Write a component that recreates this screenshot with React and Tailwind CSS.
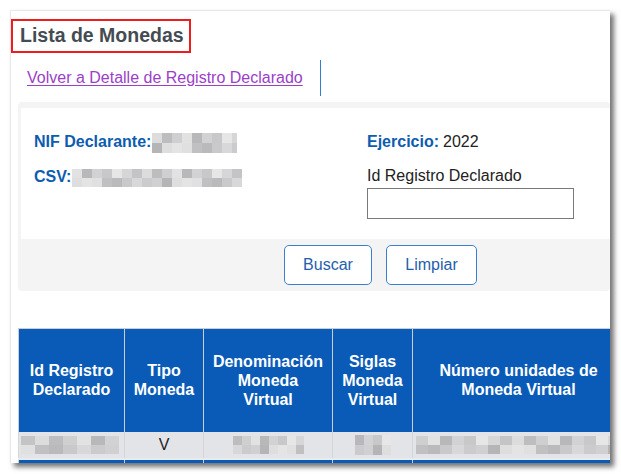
import React from "react";

const grays = [
  "bg-[#d6d6d8]", "bg-[#c4c4c6]", "bg-[#dcdcdc]", "bg-[#bdbdbf]", "bg-[#cfcfd1]",
  "bg-[#e2e2e2]", "bg-[#b8b8ba]", "bg-[#d2d2d4]", "bg-[#c8c8ca]", "bg-[#e6e6e6]",
];
const grays2 = [
  "bg-[#c9c9cb]", "bg-[#e0e0e0]", "bg-[#b5b5b7]", "bg-[#d8d8da]", "bg-[#c0c0c2]",
  "bg-[#dedede]", "bg-[#cbcbcd]", "bg-[#bababc]", "bg-[#e4e4e4]", "bg-[#d0d0d2]",
];

function Blur({ w, h, cell = 10, offset = 0 }) {
  const n = Math.ceil(w / cell);
  return (
    <span className="inline-flex flex-col overflow-hidden align-middle blur-[0.6px]" style={{ width: w, height: h }}>
      <span className="flex flex-1">
        {Array.from({ length: n }).map((_, i) => (
          <span key={i} className={`${grays[(i + offset) % grays.length]} shrink-0`} style={{ width: cell }} />
        ))}
      </span>
      <span className="flex flex-1">
        {Array.from({ length: n }).map((_, i) => (
          <span key={i} className={`${grays2[(i * 3 + offset) % grays2.length]} shrink-0`} style={{ width: cell }} />
        ))}
      </span>
    </span>
  );
}

const th = "border-x border-[#c9ced6] px-[2px] align-middle text-center text-[16px] font-bold leading-[19px] text-white";

export default function App() {
  return (
    <div className="min-h-[474px] w-[621px] bg-white pl-[10px] pt-[10px] font-['Liberation_Sans',Arial,sans-serif]">
      <div className="relative h-[453px] w-[600px] overflow-hidden border-l border-t border-[#e8e8e8] bg-white shadow-[4px_4px_5px_rgba(0,0,0,0.55)]">
        <div className="mt-[8px] flex h-[34px] w-[180px] items-center border-2 border-[#ee1c1c] pl-[7px] text-[19.5px] font-bold text-[#444b52]">
          Lista de Monedas
        </div>
        <div className="mt-[7px] flex h-[36px] items-center">
          <a href="#" className="ml-[16px] text-[16px] text-[#9b3fc9] underline underline-offset-2">
            Volver a Detalle de Registro Declarado
          </a>
          <div className="ml-[17px] h-[36px] w-px bg-[#2f7fd8]" />
        </div>

        <div className="ml-[7px] mt-[6px] rounded-[4px] bg-[#f4f4f4] pl-[3px] pt-[6px]">
          <div className="flex h-[131px] bg-white pt-[24px]">
            <div className="w-[346px] pl-[13px]">
              <div className="flex h-[20px] items-center text-[16px] font-bold text-[#0d5cb0]">
                NIF Declarante:
                <span className="ml-[1px]"><Blur w={85} h={20} cell={10} offset={2} /></span>
              </div>
              <div className="mt-[15px] flex h-[20px] items-center text-[16px] font-bold text-[#0d5cb0]">
                CSV:
                <span className="ml-[1px]"><Blur w={170} h={18} cell={10} offset={5} /></span>
              </div>
            </div>
            <div>
              <div className="flex h-[20px] items-center text-[16px] text-[#222]">
                <span className="font-bold text-[#0d5cb0]">Ejercicio:</span>
                <span className="ml-[4px]">2022</span>
              </div>
              <div className="mt-[15px] text-[16px] leading-[18px] text-[#222]">Id Registro Declarado</div>
              <input className="mt-[3px] h-[31px] w-[207px] border border-[#7a7a7a] bg-white" />
            </div>
          </div>
          <div className="flex h-[52px] items-center gap-[14px] pl-[263px]">
            <button className="h-[40px] w-[88px] rounded-[5px] border border-[#3a80cc] bg-white text-[16px] text-[#1f60ad]">
              Buscar
            </button>
            <button className="h-[40px] w-[91px] rounded-[5px] border border-[#3a80cc] bg-white text-[16px] text-[#1f60ad]">
              Limpiar
            </button>
          </div>
        </div>

        <table className="ml-[7px] mt-[37px] w-[800px] table-fixed border-collapse border-t border-[#c9ced6]">
          <colgroup>
            <col className="w-[106px]" />
            <col className="w-[79px]" />
            <col className="w-[129px]" />
            <col className="w-[80px]" />
            <col className="w-[220px]" />
            <col />
          </colgroup>
          <thead>
            <tr className="h-[103px] bg-[#0a5bb7]">
              <th className={th}>Id Registro<br />Declarado</th>
              <th className={th}>Tipo<br />Moneda</th>
              <th className={th}>Denominación<br />Moneda<br />Virtual</th>
              <th className={th}>Siglas<br />Moneda<br />Virtual</th>
              <th className={`${th} pr-[10px]`}>Número unidades de<br />Moneda Virtual</th>
              <th className={th}></th>
            </tr>
          </thead>
          <tbody>
            <tr className="h-[27px] border-b-2 border-[#e9ebef] bg-[#e3e4e7]">
              <td className="border-x border-[#d3d6db] px-[2px]"><Blur w={98} h={18} cell={14} offset={1} /></td>
              <td className="border-x border-[#d3d6db] text-center text-[16px] text-[#222]">V</td>
              <td className="border-x border-[#d3d6db] text-center"><Blur w={71} h={18} cell={9} offset={3} /></td>
              <td className="border-x border-[#d3d6db] text-center"><Blur w={36} h={20} cell={9} offset={6} /></td>
              <td className="border-x border-[#d3d6db] pl-[3px]"><Blur w={200} h={18} cell={12} offset={4} /></td>
              <td className="border-x border-[#d3d6db]"></td>
            </tr>
            <tr className="h-[20px] bg-[#0a5bb7]">
              <td className="border-x border-[#c9ced6]"></td>
              <td className="border-x border-[#c9ced6]"></td>
              <td className="border-x border-[#c9ced6]"></td>
              <td className="border-x border-[#c9ced6]"></td>
              <td className="border-x border-[#c9ced6]"></td>
              <td className="border-x border-[#c9ced6]"></td>
            </tr>
          </tbody>
        </table>
      </div>
    </div>
  );
}
